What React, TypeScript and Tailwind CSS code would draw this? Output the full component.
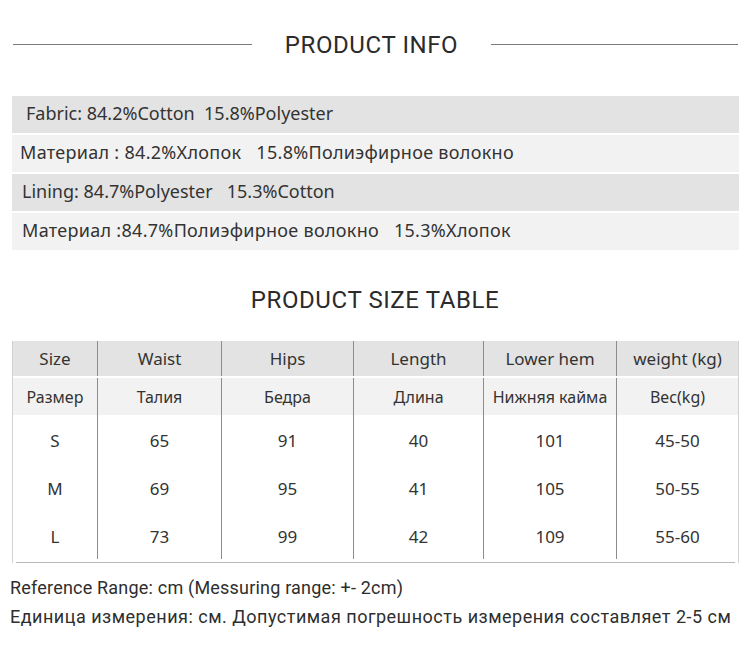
import React from "react";

const cols = ["w-[84px]", "w-[124px]", "w-[132px]", "w-[130px]", "w-[133px]", "w-[122px]"];

const header = ["Size", "Waist", "Hips", "Length", "Lower hem", "weight (kg)"];
const header2 = ["Размер", "Талия", "Бедра", "Длина", "Нижняя кайма", "Вес(kg)"];
const data = [
  ["S", "65", "91", "40", "101", "45-50"],
  ["M", "69", "95", "41", "105", "50-55"],
  ["L", "73", "99", "42", "109", "55-60"],
];

function Row({ cells, className, cellClass }: { cells: string[]; className: string; cellClass: string }) {
  return (
    <div className={"flex " + className}>
      {cells.map((c, i) => (
        <div
          key={i}
          className={
            "flex items-center justify-center " +
            cols[i] +
            (i > 0 ? " border-l border-[#8c8c8c]" : "") +
            " " +
            cellClass
          }
        >
          {c}
        </div>
      ))}
    </div>
  );
}

function Title({ text }: { text: string }) {
  return (
    <div className="text-[24px] leading-[30px] tracking-[0.6px] text-[#2b2b2b]" style={{ fontFamily: "Roboto, sans-serif" }}>
      {text}
    </div>
  );
}

export default function App() {
  const body = { fontFamily: '"Noto Sans", sans-serif' };
  return (
    <div className="w-[750px] h-[653px] bg-white text-[#333]" style={body}>
      <div className="h-[88px] pt-[2px] flex items-center">
        <div className="ml-[13px] w-[239px] h-px bg-[#7a7a7a] mb-[2px]" />
        <div className="flex-1 flex justify-center">
          <Title text="PRODUCT INFO" />
        </div>
        <div className="mr-[12px] w-[247px] h-px bg-[#7a7a7a] mb-[2px]" />
      </div>
      <div className="pt-[8px] pl-[12px] flex flex-col gap-[2px] text-[18px]">
        <div className="w-[727px] h-[37px] bg-[#e3e3e3] flex items-center pl-[14px] pb-[3px] whitespace-pre">Fabric: 84.2%Cotton  15.8%Polyester</div>
        <div className="w-[727px] h-[37px] bg-[#f2f2f2] flex items-center pl-[8px] pb-[3px] tracking-[0.3px] whitespace-pre">Материал : 84.2%Хлопок   15.8%Полиэфирное волокно</div>
        <div className="w-[727px] h-[37px] bg-[#e3e3e3] flex items-center pl-[10px] pb-[3px] whitespace-pre">Lining: 84.7%Polyester   15.3%Cotton</div>
        <div className="w-[727px] h-[37px] bg-[#f2f2f2] flex items-center pl-[10px] pb-[3px] tracking-[0.3px] whitespace-pre">Материал :84.7%Полиэфирное волокно   15.3%Хлопок</div>
      </div>
      <div className="h-[91px] pt-[35px] flex justify-center">
        <Title text="PRODUCT SIZE TABLE" />
      </div>
      <div className="ml-[12px] w-[727px] border-x border-[#d2d2d2] text-[17px]">
        <Row cells={header} className="h-[35px] bg-[#e3e3e3]" cellClass="" />
        <div className="h-[2px] bg-white" />
        <Row cells={header2} className="h-[37px] bg-[#f2f2f2]" cellClass="text-[16px]" />
        {data.map((r, i) => (
          <Row key={i} cells={r} className="h-[48px] bg-white" cellClass="pt-[3px]" />
        ))}
        <div className="h-[3px]" />
        <div className="mx-[3px] h-px bg-[#b8b8b8]" />
      </div>
      <div className="pt-[10px] pl-[10px] text-[18px] leading-[29px] text-[#2e2e2e]" style={{ fontFamily: "Roboto, sans-serif" }}>
        <div className="tracking-[0.2px]">Reference Range: cm (Messuring range: +- 2cm)</div>
        <div className="tracking-[0.5px]">Единица измерения: см. Допустимая погрешность измерения составляет 2-5 см</div>
      </div>
    </div>
  );
}
